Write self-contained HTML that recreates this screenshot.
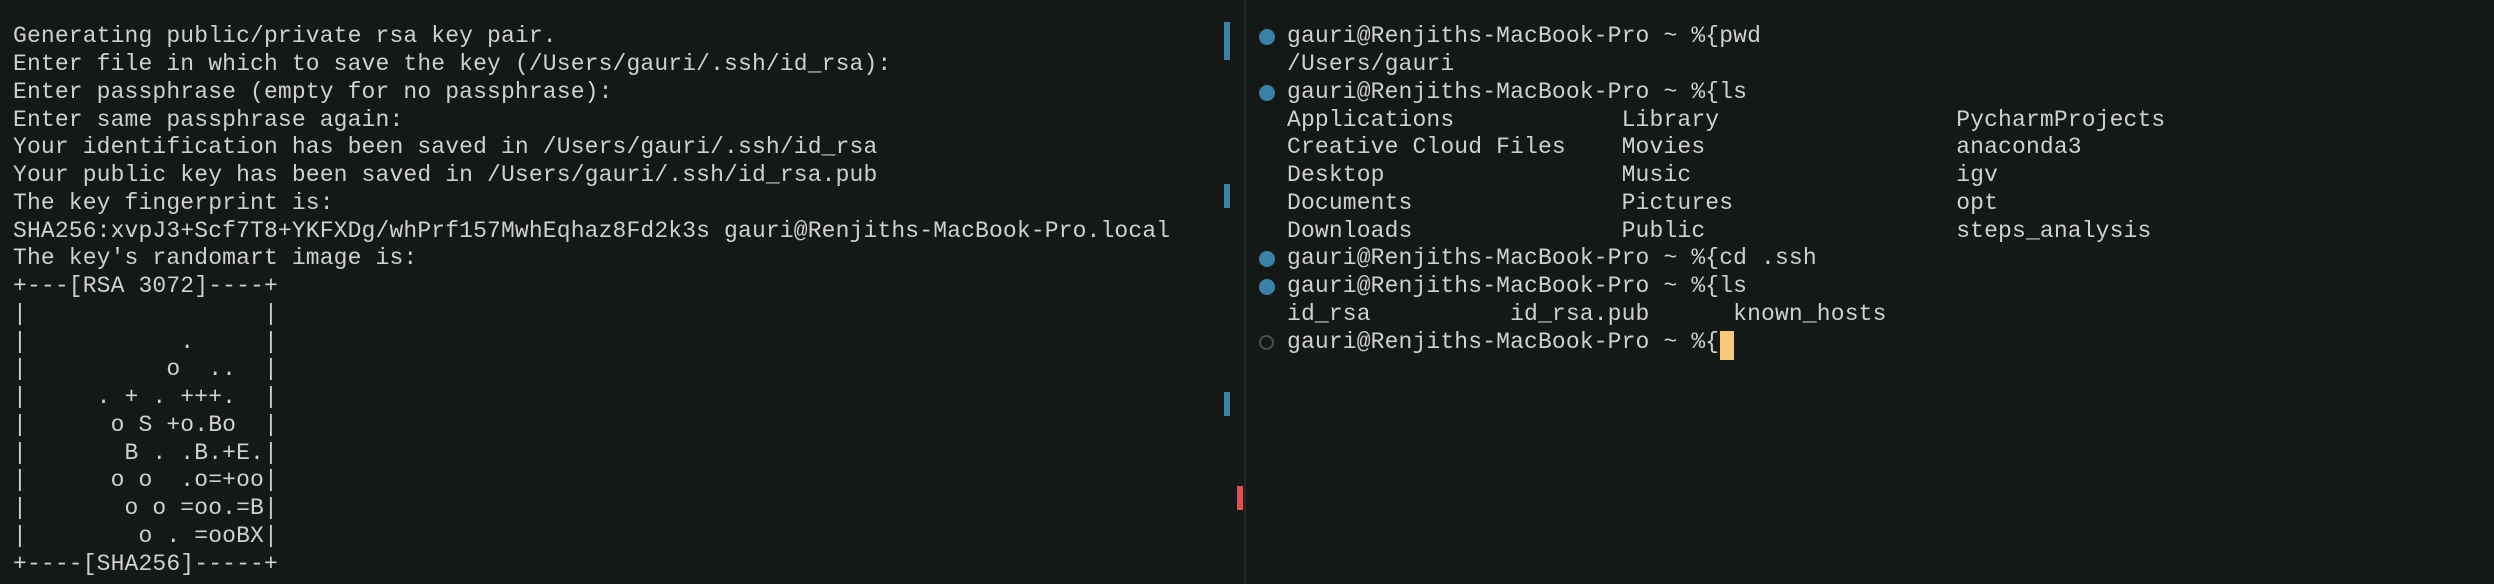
<!DOCTYPE html>
<html><head><meta charset="utf-8"><style>
html,body{margin:0;padding:0;width:2494px;height:584px;background:#141918;overflow:hidden}
pre{margin:0;position:absolute;font-family:"Liberation Mono",monospace;font-size:23px;letter-spacing:0.14px;line-height:27.75px;color:#d0d0d0;white-space:pre}
.div{position:absolute;left:1244px;top:0;width:2px;height:584px;background:#242a29}
.bar{position:absolute;width:6px;background:#3a82a8}
.dot{position:absolute;left:1259px;width:16px;height:16px;border-radius:50%;background:#3a82a8}
.ring{position:absolute;left:1259px;width:11px;height:11px;border-radius:50%;border:2.5px solid #4a4f4e}
.cur{position:absolute;left:1720px;top:331px;width:14px;height:29px;background:#f6c97a}
</style></head><body>
<pre style="left:13px;top:23.3px">Generating public/private rsa key pair.
Enter file in which to save the key (/Users/gauri/.ssh/id_rsa):
Enter passphrase (empty for no passphrase):
Enter same passphrase again:
Your identification has been saved in /Users/gauri/.ssh/id_rsa
Your public key has been saved in /Users/gauri/.ssh/id_rsa.pub
The key fingerprint is:
SHA256:xvpJ3+Scf7T8+YKFXDg/whPrf157MwhEqhaz8Fd2k3s gauri@Renjiths-MacBook-Pro.local
The key's randomart image is:
+---[RSA 3072]----+
|                 |
|           .     |
|          o  ..  |
|     . + . +++.  |
|      o S +o.Bo  |
|       B . .B.+E.|
|      o o  .o=+oo|
|       o o =oo.=B|
|        o . =ooBX|
+----[SHA256]-----+</pre>
<div class="bar" style="left:1224px;top:22px;height:38px"></div>
<div class="bar" style="left:1224px;top:184px;height:24px"></div>
<div class="bar" style="left:1224px;top:392px;height:24px"></div>
<div class="bar" style="left:1237px;top:486px;height:24px;background:#e05252"></div>
<div class="div"></div>
<div class="dot" style="top:29px"></div>
<div class="dot" style="top:84.5px"></div>
<div class="dot" style="top:251px"></div>
<div class="dot" style="top:279px"></div>
<div class="ring" style="top:335px"></div>
<pre style="left:1287px;top:23.3px">gauri@Renjiths-MacBook-Pro ~ %{pwd
/Users/gauri
gauri@Renjiths-MacBook-Pro ~ %{ls
Applications            Library                 PycharmProjects
Creative Cloud Files    Movies                  anaconda3
Desktop                 Music                   igv
Documents               Pictures                opt
Downloads               Public                  steps_analysis
gauri@Renjiths-MacBook-Pro ~ %{cd .ssh
gauri@Renjiths-MacBook-Pro ~ %{ls
id_rsa          id_rsa.pub      known_hosts
gauri@Renjiths-MacBook-Pro ~ %{</pre>
<div class="cur"></div>
</body></html>
